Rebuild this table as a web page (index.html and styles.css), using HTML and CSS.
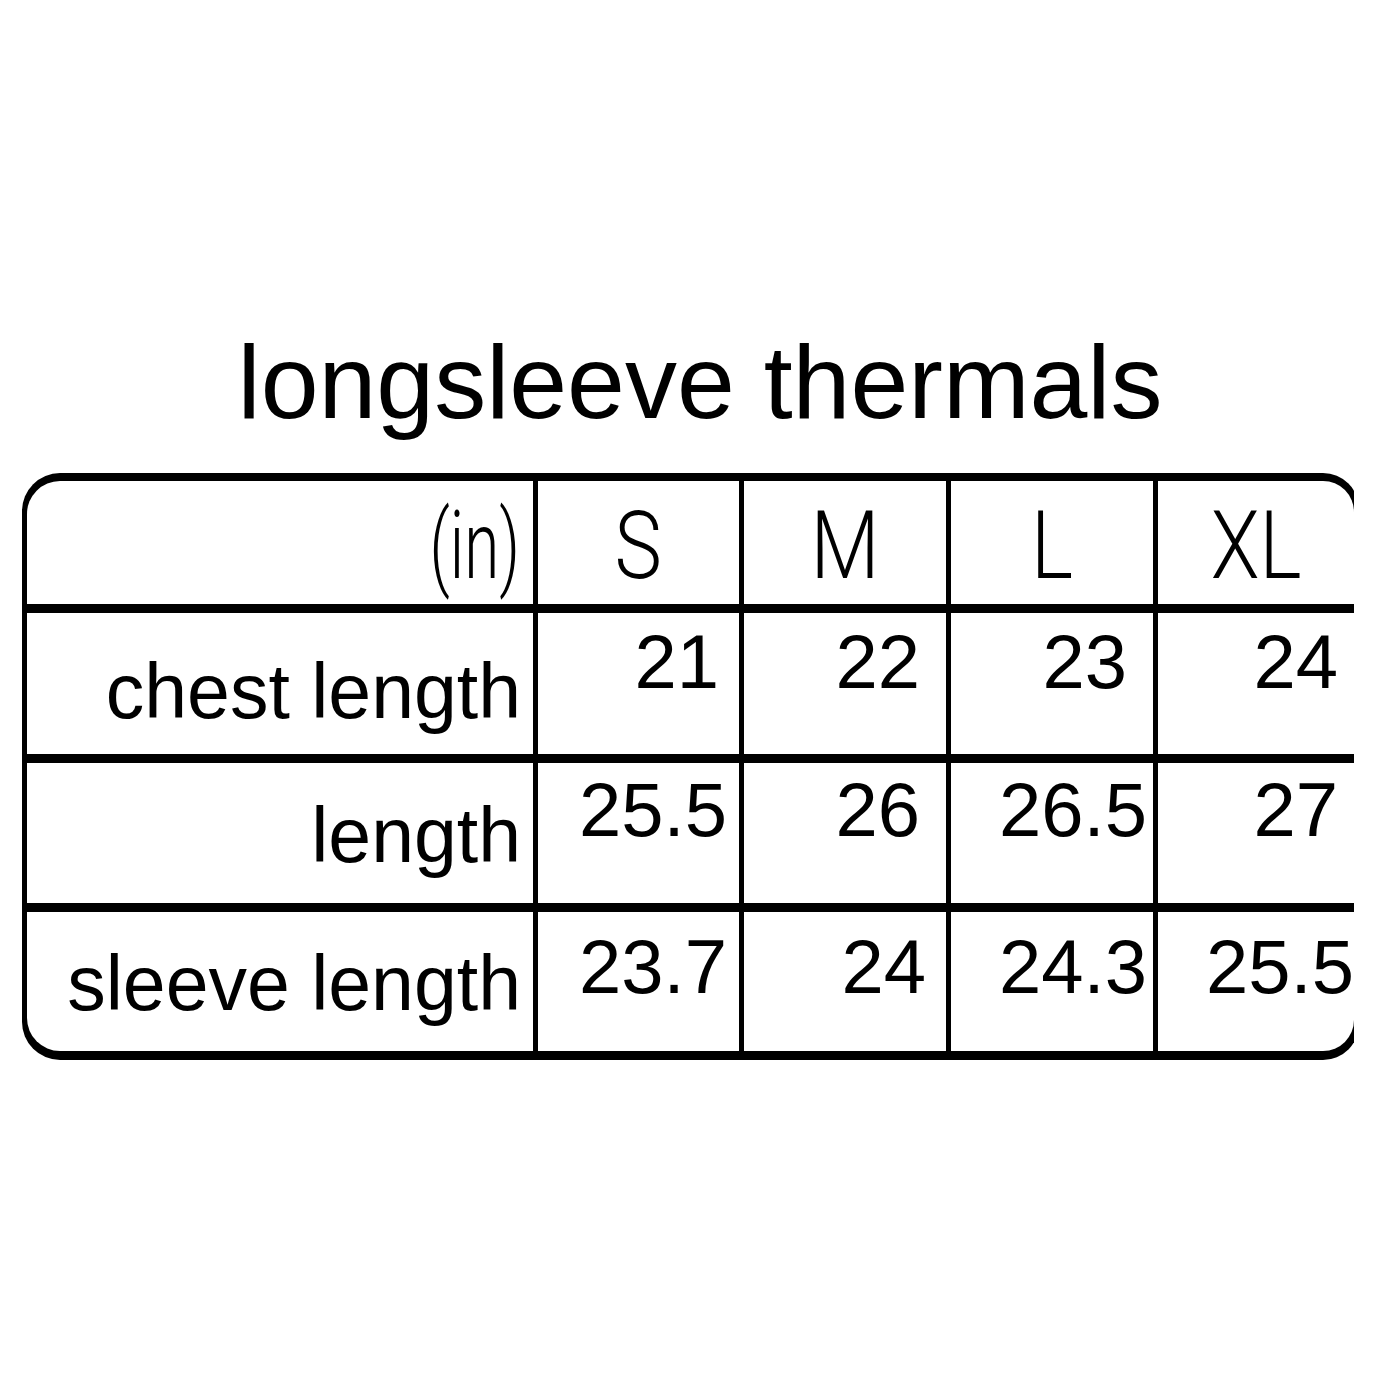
FILE: index.html
```html
<!DOCTYPE html>
<html lang="en">
<head>
<meta charset="utf-8">
<title>longsleeve thermals</title>
<link rel="stylesheet" href="styles.css">
</head>
<body>
<main class="page">
  <h1 class="title">longsleeve thermals</h1>
  <div class="chart">
    <div class="grid">
      <div class="cell head unit-cell corner-tl"><span class="cond unit">(in)</span></div>
      <div class="cell head size"><span class="cond">S</span></div>
      <div class="cell head size"><span class="cond">M</span></div>
      <div class="cell head size"><span class="cond">L</span></div>
      <div class="cell head size corner-tr"><span class="cond">XL</span></div>

      <div class="cell label r1">chest length</div>
      <div class="cell num r1 pr-20">21</div>
      <div class="cell num r1 pr-26">22</div>
      <div class="cell num r1 pr-26">23</div>
      <div class="cell num r1 pr-16">24</div>

      <div class="cell label r2">length</div>
      <div class="cell num r2 pr-12">25.5</div>
      <div class="cell num r2 pr-26">26</div>
      <div class="cell num r2 pr-6">26.5</div>
      <div class="cell num r2 pr-16">27</div>

      <div class="cell label r3 corner-bl">sleeve length</div>
      <div class="cell num r3 pr-12">23.7</div>
      <div class="cell num r3 pr-20">24</div>
      <div class="cell num r3 pr-6">24.3</div>
      <div class="cell num r3 pr-0 corner-br">25.5</div>
    </div>
  </div>
</main>
</body>
</html>
```
FILE: styles.css
```css
html, body {
  margin: 0;
  padding: 0;
  background: #ffffff;
}

body {
  width: 1400px;
  height: 1400px;
  overflow: hidden;
  font-family: "Liberation Sans", Arial, Helvetica, sans-serif;
  color: #000;
}

.page {
  display: flex;
  flex-direction: column;
  padding-top: 330px;
}

.title {
  margin: 0;
  font-weight: 400;
  font-size: 104px;
  line-height: 104px;
  text-align: center;
  color: #000;
}

.chart {
  margin-top: 39px;
  margin-left: 22px;
  width: 1332px;
  overflow: hidden;
}

.grid {
  width: 1337px;
  box-sizing: border-box;
  display: grid;
  grid-template-columns: 506px 201px 202px 202px 196px;
  grid-template-rows: 123px 141px 140px 139px;
  column-gap: 5px;
  row-gap: 9px;
  padding: 8px 5px 9px 5px;
  background: #000;
  border-radius: 38px 36px 36px 38px;
}

.cell {
  background: #fff;
  font-size: 76px;
  line-height: 76px;
  white-space: nowrap;
}

.corner-tl { border-top-left-radius: 33px; }
.corner-tr { border-top-right-radius: 31px; }
.corner-bl { border-bottom-left-radius: 33px; }
.corner-br { border-bottom-right-radius: 31px; }

.head {
  font-family: "Roboto", "Liberation Sans", sans-serif;
  font-weight: 300;
  font-size: 95px;
  line-height: 95px;
  padding-top: 17px;
}

.unit-cell {
  text-align: right;
  padding-right: 13px;
}

.size {
  text-align: center;
}

.cond {
  display: inline-block;
  transform: scaleX(0.84);
}

.cond.unit {
  transform: scaleX(0.67);
  transform-origin: right center;
}

.label {
  text-align: right;
  padding-right: 12px;
  font-size: 77px;
}

.num {
  text-align: right;
}

.label.r1 { padding-top: 40px; }
.label.r2 { padding-top: 34px; }
.label.r3 { padding-top: 33px; }

.num.r1 { padding-top: 11px; }
.num.r2 { padding-top: 9px; }
.num.r3 { padding-top: 17px; }

.pr-0 { padding-right: 0; }
.pr-6 { padding-right: 6px; }
.pr-12 { padding-right: 12px; }
.pr-16 { padding-right: 16px; }
.pr-20 { padding-right: 20px; }
.pr-26 { padding-right: 26px; }
```
